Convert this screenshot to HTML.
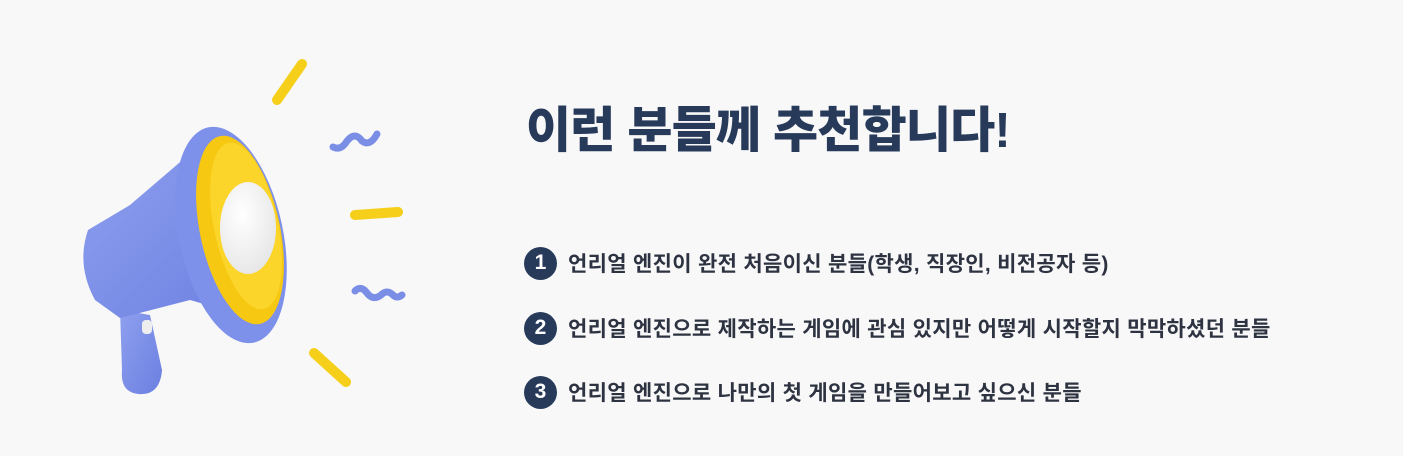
<!DOCTYPE html>
<html><head><meta charset="utf-8"><style>
body{margin:0;width:1403px;height:456px;background:#f8f8f8;overflow:hidden;position:relative;font-family:"Liberation Sans","Noto Sans CJK KR",sans-serif}
h1{position:absolute;left:526px;top:96px;margin:0;font-size:49px;font-weight:900;color:#283a5a;letter-spacing:-0.8px;line-height:70px;white-space:nowrap}
.it{position:absolute;left:524px;height:34px;display:flex;align-items:center;white-space:nowrap}
.n{width:33px;height:33px;border-radius:50%;background:#283a5a;color:#fff;font-weight:700;font-size:21px;display:flex;align-items:center;justify-content:center;margin-right:11px}
.t{font-size:21px;font-weight:700;color:#2e3342;letter-spacing:0.3px}
</style></head><body>
<svg width="430" height="456" style="position:absolute;left:0;top:0">
<defs>
<linearGradient id="b" x1="0" y1="0" x2="1" y2="1"><stop offset="0" stop-color="#8fa0ef"/><stop offset="1" stop-color="#6b7fe0"/></linearGradient>
<radialGradient id="w" cx=".4" cy=".35" r=".7"><stop offset="0" stop-color="#fff"/><stop offset="1" stop-color="#e6e6e6"/></radialGradient>
</defs>
<g stroke-linecap="round" fill="none">
<line x1="277" y1="100" x2="302" y2="64" stroke="#f5cf1a" stroke-width="10"/>
<line x1="355" y1="215" x2="398" y2="212" stroke="#f5cf1a" stroke-width="10"/>
<line x1="314" y1="353" x2="346" y2="382" stroke="#f5cf1a" stroke-width="10"/>
<path d="M333 147 q8 4 14-6 q8-10 15 0 q8 6 15-7" stroke="#7b8ee6" stroke-width="7"/>
<path d="M355 291 q6-6 12 2 q6 8 14 2 q6-6 12 0 q4 4 9 0" stroke="#7b8ee6" stroke-width="7"/>
</g>
<path d="M120 310 L150 315 L162 370 Q160 396 138 394 Q120 392 122 370 Z" fill="url(#b)"/>
<rect x="142" y="320" width="10" height="14" rx="4" fill="#eee"/>
<path d="M88 230 Q76 265 95 300 L120 318 L190 300 L260 320 L250 150 L200 145 L130 205 Z" fill="url(#b)"/>
<ellipse cx="231" cy="235" rx="52" ry="110" transform="rotate(-12 231 235)" fill="#7d90ea"/>
<ellipse cx="240" cy="230" rx="40" ry="96" transform="rotate(-12 240 230)" fill="#f7c812"/>
<ellipse cx="246" cy="226" rx="32" ry="85" transform="rotate(-12 246 226)" fill="#fbd52a"/>
<ellipse cx="248" cy="228" rx="28" ry="46" fill="url(#w)"/>
</svg>
<h1>이런 분들께 추천합니다!</h1>
<div class="it" style="top:246px"><div class="n">1</div><div class="t">언리얼 엔진이 완전 처음이신 분들(학생, 직장인, 비전공자 등)</div></div>
<div class="it" style="top:311px"><div class="n">2</div><div class="t">언리얼 엔진으로 제작하는 게임에 관심 있지만 어떻게 시작할지 막막하셨던 분들</div></div>
<div class="it" style="top:375px"><div class="n">3</div><div class="t">언리얼 엔진으로 나만의 첫 게임을 만들어보고 싶으신 분들</div></div>
</body></html>
